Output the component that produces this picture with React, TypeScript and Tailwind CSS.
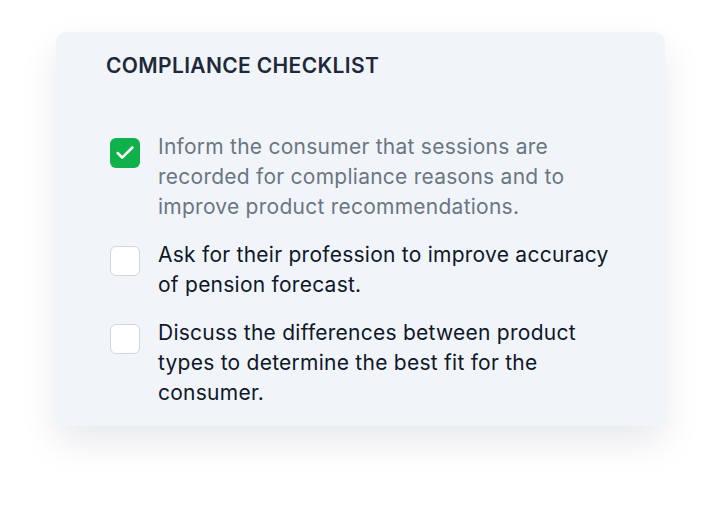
import { Check } from 'lucide-react';

const items = [
  { text: 'Inform the consumer that sessions are recorded for compliance reasons and to improve product recommendations.', done: true },
  { text: 'Ask for their profession to improve accuracy of pension forecast.', done: false },
  { text: 'Discuss the differences between product types to determine the best fit for the consumer.', done: false },
];

export default function App() {
  return (
    <div className="min-h-[506px] w-[722px] bg-white pl-[56px] pt-[32px] font-['Inter',sans-serif]">
      <div className="w-[609px] rounded-[10px] bg-[#f1f5f9] pb-[18px] pl-[50px] pr-[50px] pt-[20px] shadow-[0_16px_36px_rgba(30,41,80,0.10)]">
        <h2 className="text-[21px] font-semibold leading-[28px] tracking-[0.35px] text-[#1e293b]">
          COMPLIANCE CHECKLIST
        </h2>
        <ul className="mt-[52px] flex flex-col gap-[18px] pl-[4px]">
          {items.map((item) => (
            <li key={item.text} className="flex items-start gap-[18px]">
              {item.done ? (
                <span className="mt-[6px] flex h-[30px] w-[30px] shrink-0 items-center justify-center rounded-[6px] bg-[#10b04a]">
                  <Check className="h-[22px] w-[22px] text-white" strokeWidth={2.8} />
                </span>
              ) : (
                <span className="mt-[6px] h-[30px] w-[30px] shrink-0 rounded-[6px] border-[1.5px] border-[#cfd6df] bg-white" />
              )}
              <span
                className={
                  item.done
                    ? 'text-[21px] leading-[30px] tracking-[0.25px] text-[#6b7684]'
                    : 'text-[21px] leading-[30px] tracking-[0.25px] text-[#0f172a]'
                }
              >
                {item.text}
              </span>
            </li>
          ))}
        </ul>
      </div>
    </div>
  );
}
